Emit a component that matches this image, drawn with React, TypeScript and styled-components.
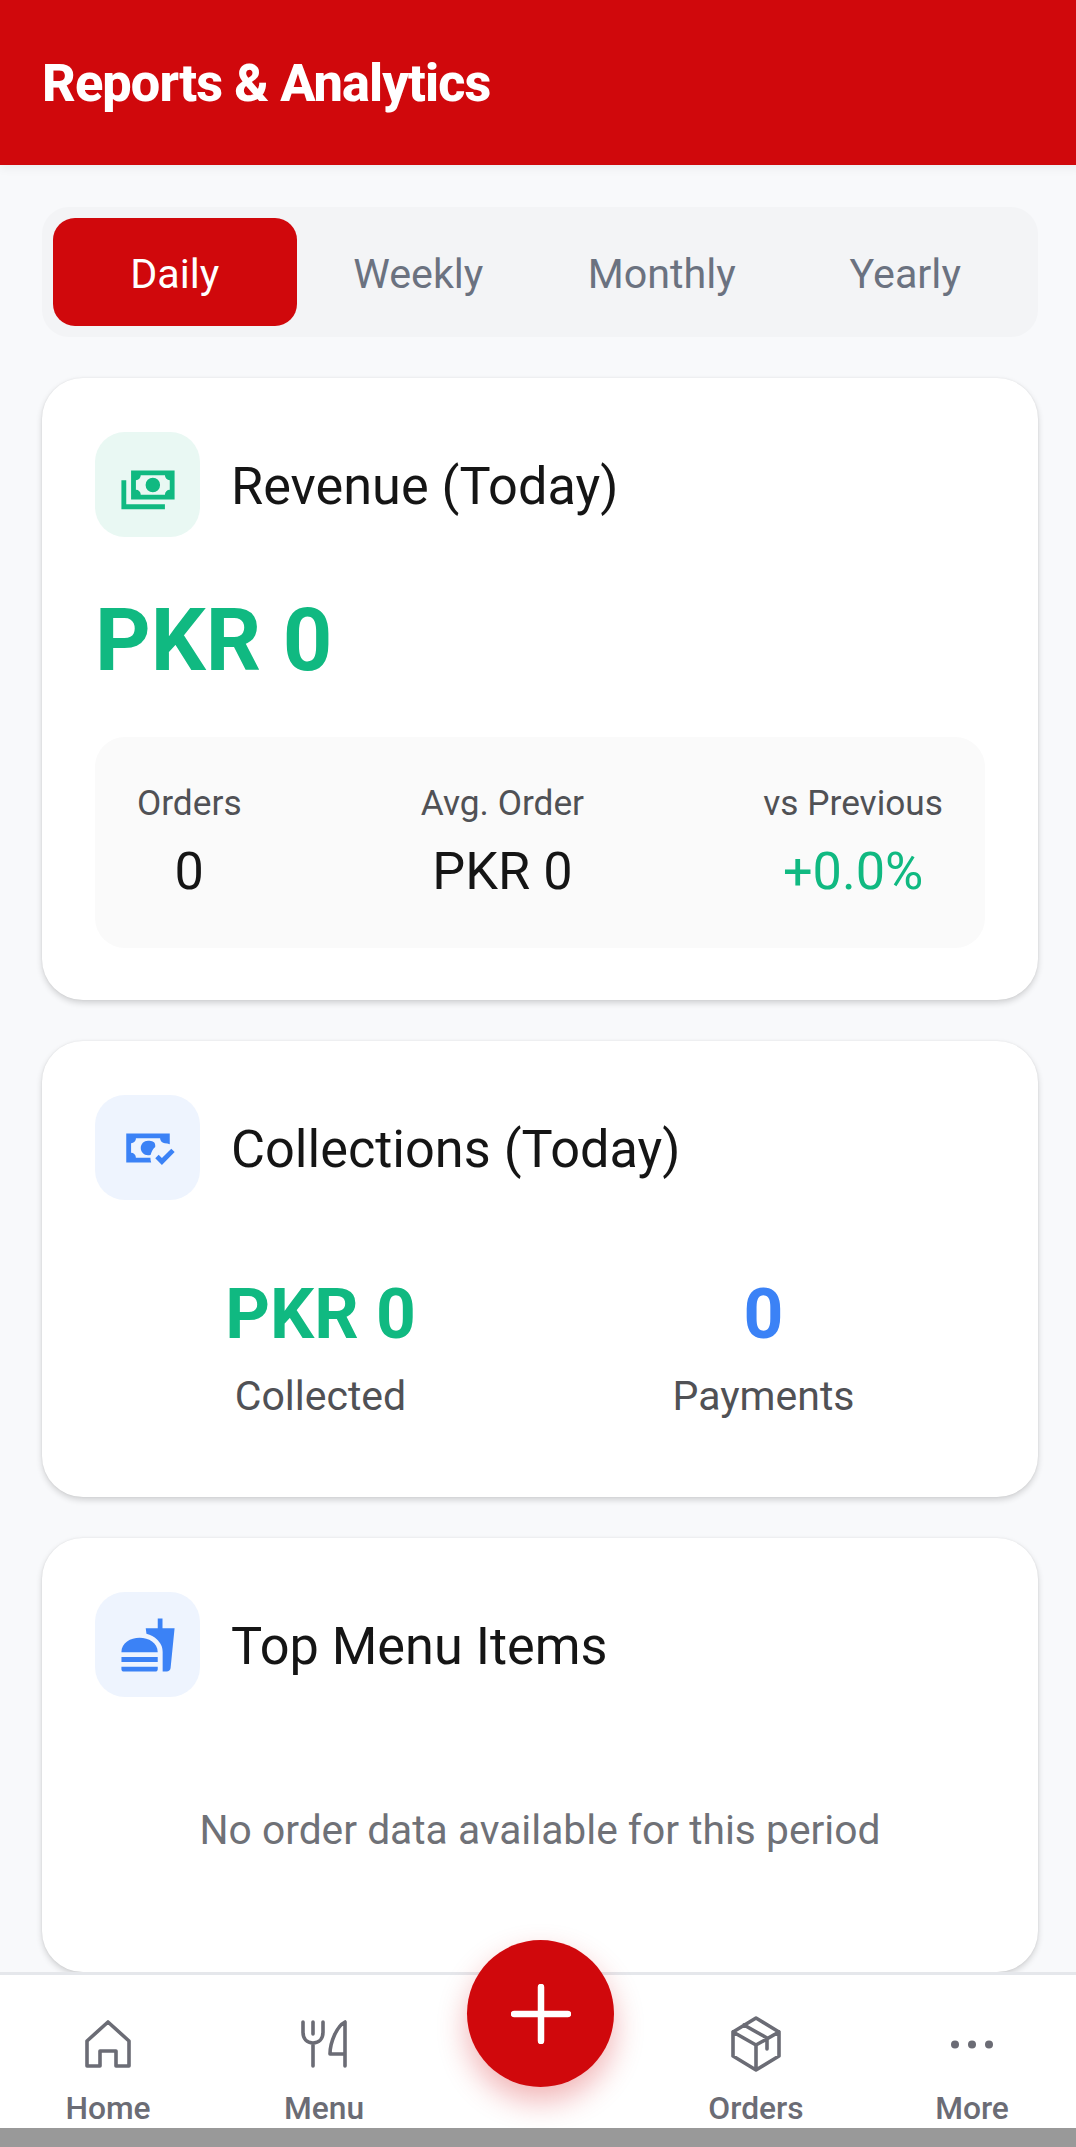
import React from "react";
import styled, { createGlobalStyle } from "styled-components";
import { MdFastfood } from "react-icons/md";

const Global = createGlobalStyle`
  html, body { margin: 0; padding: 0; background: #f8f9fb; overflow: hidden; }
  * { box-sizing: border-box; }
`;
const Page = styled.div`
  width: 1080px; height: 2147px; display: flex; flex-direction: column; overflow: hidden;
  font-family: Roboto, "Liberation Sans", sans-serif; background: #f8f9fb; position: relative;
`;
const Header = styled.header`
  flex: 0 0 165px; background: #d0080c; display: flex; align-items: center; padding: 0 42px 0;
  box-shadow: 0 3px 10px rgba(0,0,0,.06); z-index: 1;
`;
const HeaderTitle = styled.h1`
  margin: 0 0 -2px; color: #fff; font-size: 52.25px; font-weight: 800; letter-spacing: -0.9px;
`;
const Main = styled.main`
  flex: 1 1 0; min-height: 0; overflow: hidden; padding: 42px 42px 0; display: flex; flex-direction: column; gap: 41px;
`;
const Tabs = styled.div`
  flex: 0 0 130px; background: #f3f4f6; border-radius: 27px; padding: 11px; display: grid; grid-template-columns: repeat(4, 1fr); gap: 0;
`;
const Tab = styled.div<{ $active?: boolean }>`
  border-radius: 22px; display: flex; align-items: center; justify-content: center; padding-top: 3px;
  font-size: 41.25px; color: ${p => (p.$active ? "#fff" : "#6b7280")}; background: ${p => (p.$active ? "#d0080c" : "transparent")};
`;
const Card = styled.section<{ $h: number }>`
  flex: 0 0 ${p => p.$h}px; background: #fff; border-radius: 41px; padding: 54px 53px 0;
  box-shadow: 0 3px 6px rgba(0,0,0,.16), 0 0 2px rgba(0,0,0,.08);
`;
const CardHead = styled.div`
  display: flex; align-items: center; gap: 31px;
`;
const IconBox = styled.div<{ $bg: string; $fg: string }>`
  width: 105px; height: 105px; border-radius: 30px; display: flex; align-items: center; justify-content: center;
  background: ${p => p.$bg}; color: ${p => p.$fg};
`;
const CardTitle = styled.h2`
  margin: 3px 0 0; font-size: 52.25px; font-weight: 400; color: #151515;
`;
const BigValue = styled.div`
  margin-top: 52px; font-size: 86.5px; line-height: 104px; font-weight: 700; color: #10b981;
`;
const StatsBox = styled.div`
  margin-top: 44px; height: 211px; background: #fafafa; border-radius: 30px; padding: 0 42px; display: flex; align-items: center; justify-content: space-between;
`;
const Stat = styled.div`
  display: flex; flex-direction: column; align-items: center; gap: 18px;
`;
const StatLabel = styled.div`
  font-size: 35.25px; color: #505155; line-height: 44px; margin-top: -3px;
`;
const StatValue = styled.div<{ $c?: string }>`
  font-size: 52.25px; line-height: 58px; color: ${p => p.$c || "#151515"};
`;
const CollectRow = styled.div`
  margin-top: 76px; display: grid; grid-template-columns: 1fr 1fr; padding-left: 4px;
`;
const Collect = styled.div`
  display: flex; flex-direction: column; align-items: center; gap: 16px;
`;
const CollectValue = styled.div<{ $c: string }>`
  font-size: 69.5px; line-height: 78px; font-weight: 700; color: ${p => p.$c};
`;
const CollectLabel = styled.div`
  font-size: 41px; line-height: 52px; color: #505155;
`;
const Empty = styled.div`
  margin-top: 107px; text-align: center; font-size: 40.75px; line-height: 52px; color: #6f7177;
`;
const Nav = styled.nav`
  flex: 0 0 156px; background: #fff; border-top: 3px solid #e5e7eb; position: relative; display: grid;
  grid-template-columns: repeat(5, 1fr); z-index: 2;
`;
const NavItem = styled.div`
  display: flex; flex-direction: column; align-items: center; color: #6b6c75; padding-top: 42px;
`;
const NavIcon = styled.div`
  height: 54px; display: flex; align-items: center; justify-content: center;
`;
const NavLabel = styled.div`
  margin-top: 20px; font-size: 31.75px; line-height: 36px; font-weight: 500;
`;
const Fab = styled.button`
  position: absolute; left: 467px; top: -35px; width: 147px; height: 147px; border-radius: 50%; border: 0; padding: 0;
  background: #d0080c; display: flex; align-items: center; justify-content: center;
  box-shadow: 0 14px 30px rgba(208,8,12,.3);
`;
const BottomBar = styled.div`
  flex: 0 0 19px; background: #999; z-index: 3;
`;

const CashMultiple = () => (
  <svg width="58" height="58" viewBox="0 0 24 24" fill="currentColor">
    <path d="M5,6H23V18H5V6M14,9A3,3 0 0,1 17,12A3,3 0 0,1 14,15A3,3 0 0,1 11,12A3,3 0 0,1 14,9M9,8A2,2 0 0,1 7,10V14A2,2 0 0,1 9,16H19A2,2 0 0,1 21,14V10A2,2 0 0,1 19,8H9M1,10H3V20H19V22H1V10Z" />
  </svg>
);
const CashCheck = () => (
  <svg width="58" height="58" viewBox="0 0 24 24" fill="currentColor">
    <path d="M3,6V18H13.32C13.1,17.33 13,16.66 13,16H7A2,2 0 0,0 5,14V10C6.11,10 7,9.11 7,8H17A2,2 0 0,0 19,10V10.06C19.67,10.06 20.34,10.18 21,10.4V6H3M12,9C10.3,9.03 9,10.3 9,12C9,13.7 10.3,14.94 12,15C12.38,15 12.77,14.92 13.14,14.77C13.41,13.67 13.86,12.63 14.97,11.61C15,11.41 15,11.2 15,11C14.97,9.3 13.7,9.03 12,9M21.63,12.27L17.76,16.17L16.41,14.8L15,16.22L17.75,19L23.03,13.68L21.63,12.27Z" />
  </svg>
);
const stroke = { fill: "none", stroke: "currentColor", strokeWidth: 3.6, strokeLinecap: "round", strokeLinejoin: "round" } as const;
const HomeIcon = () => (
  <svg width="46" height="48" viewBox="0 0 46 48" {...stroke}>
    <path d="M2 21 L23 2 L44 21 V46 H31 V31 H15 V46 H2 Z" />
  </svg>
);
const MenuIcon = () => (
  <svg width="46" height="48" viewBox="0 0 46 48" {...stroke}>
    <path d="M2 2 V12 C2 19 6 23 12 23 C18 23 22 19 22 12 V2 M12 2 V14 M12 23 V46 M44 2 V46 M44 2 C36 6 29 22 29 34 H44" />
  </svg>
);
const BoxIcon = () => (
  <svg width="52" height="56" viewBox="0 0 52 56" {...stroke}>
    <path d="M26 2 L49 16 V40 L26 54 L3 40 V16 Z M3 16 L26 29 L49 16 M26 29 V54 M14 9 L37 22 V33" />
  </svg>
);
const DotsIcon = () => (
  <svg width="42" height="9" viewBox="0 0 42 9" fill="currentColor">
    <circle cx="4" cy="4.5" r="4" /><circle cx="21" cy="4.5" r="4" /><circle cx="38" cy="4.5" r="4" />
  </svg>
);
const PlusIcon = () => (
  <svg width="60" height="60" viewBox="0 0 60 60" fill="none" stroke="#fff" strokeWidth="6.5" strokeLinecap="round">
    <path d="M30 3 V57 M3 30 H57" />
  </svg>
);

export default function App() {
  return (
    <Page>
      <Global />
      <Header><HeaderTitle>Reports &amp; Analytics</HeaderTitle></Header>
      <Main>
        <Tabs>
          <Tab $active>Daily</Tab>
          <Tab>Weekly</Tab>
          <Tab>Monthly</Tab>
          <Tab>Yearly</Tab>
        </Tabs>
        <Card $h={622}>
          <CardHead>
            <IconBox $bg="#e9f8f3" $fg="#10b981"><CashMultiple /></IconBox>
            <CardTitle>Revenue (Today)</CardTitle>
          </CardHead>
          <BigValue>PKR 0</BigValue>
          <StatsBox>
            <Stat><StatLabel>Orders</StatLabel><StatValue>0</StatValue></Stat>
            <Stat><StatLabel>Avg. Order</StatLabel><StatValue>PKR 0</StatValue></Stat>
            <Stat><StatLabel>vs Previous</StatLabel><StatValue $c="#10b981">+0.0%</StatValue></Stat>
          </StatsBox>
        </Card>
        <Card $h={456}>
          <CardHead>
            <IconBox $bg="#eef4fe" $fg="#3b82f6"><CashCheck /></IconBox>
            <CardTitle>Collections (Today)</CardTitle>
          </CardHead>
          <CollectRow>
            <Collect><CollectValue $c="#10b981">PKR 0</CollectValue><CollectLabel>Collected</CollectLabel></Collect>
            <Collect><CollectValue $c="#3b82f6">0</CollectValue><CollectLabel>Payments</CollectLabel></Collect>
          </CollectRow>
        </Card>
        <Card $h={434}>
          <CardHead>
            <IconBox $bg="#eef4fe" $fg="#3b82f6"><MdFastfood size={58} /></IconBox>
            <CardTitle>Top Menu Items</CardTitle>
          </CardHead>
          <Empty>No order data available for this period</Empty>
        </Card>
      </Main>
      <Nav>
        <NavItem><NavIcon><HomeIcon /></NavIcon><NavLabel>Home</NavLabel></NavItem>
        <NavItem><NavIcon><MenuIcon /></NavIcon><NavLabel>Menu</NavLabel></NavItem>
        <div />
        <NavItem><NavIcon><BoxIcon /></NavIcon><NavLabel>Orders</NavLabel></NavItem>
        <NavItem><NavIcon><DotsIcon /></NavIcon><NavLabel>More</NavLabel></NavItem>
        <Fab aria-label="Add"><PlusIcon /></Fab>
      </Nav>
      <BottomBar />
    </Page>
  );
}
